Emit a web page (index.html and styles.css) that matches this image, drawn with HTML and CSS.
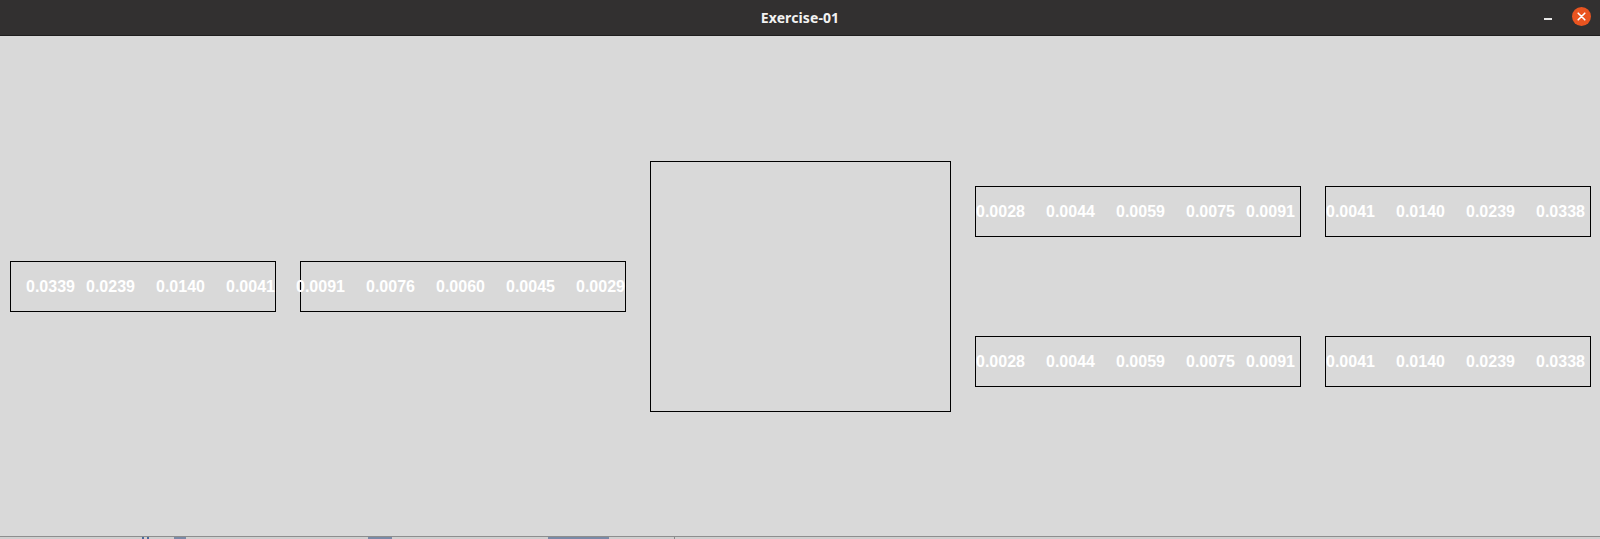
FILE: index.html
```html
<!DOCTYPE html>
<html>
<head>
<meta charset="utf-8">
<title>Exercise-01</title>
<link rel="stylesheet" href="styles.css">
</head>
<body>
<div class="window">
  <header class="titlebar">
    <div class="title">Exercise-01</div>
    <div class="controls">
      <span class="minimize"></span>
      <span class="close">
        <svg width="19" height="19" viewBox="0 0 19 19"><circle cx="9.5" cy="9.5" r="9.5" fill="#e95420"/><path d="M6.2 6.2 L12.8 12.8 M12.8 6.2 L6.2 12.8" stroke="#fff" stroke-width="1.6" stroke-linecap="round"/></svg>
      </span>
    </div>
  </header>
  <main class="content">
    <div class="readout w266 pad-15">
      <span class="val narrow">0.0339</span>
      <span class="val">0.0239</span>
      <span class="val">0.0140</span>
      <span class="val">0.0041</span>
    </div>
    <div class="readout w326 pull-5">
      <span class="val">0.0091</span>
      <span class="val">0.0076</span>
      <span class="val">0.0060</span>
      <span class="val">0.0045</span>
      <span class="val">0.0029</span>
    </div>
    <div class="canvas"></div>
    <div class="column">
      <div class="readout w326">
        <span class="val">0.0028</span>
        <span class="val">0.0044</span>
        <span class="val">0.0059</span>
        <span class="val narrow">0.0075</span>
        <span class="val">0.0091</span>
      </div>
      <div class="readout w326">
        <span class="val">0.0028</span>
        <span class="val">0.0044</span>
        <span class="val">0.0059</span>
        <span class="val narrow">0.0075</span>
        <span class="val">0.0091</span>
      </div>
    </div>
    <div class="column">
      <div class="readout w266">
        <span class="val">0.0041</span>
        <span class="val">0.0140</span>
        <span class="val">0.0239</span>
        <span class="val">0.0338</span>
      </div>
      <div class="readout w266">
        <span class="val">0.0041</span>
        <span class="val">0.0140</span>
        <span class="val">0.0239</span>
        <span class="val">0.0338</span>
      </div>
    </div>
  </main>
  <div class="desktop"></div>
</div>
</body>
</html>
```

FILE: styles.css
```css
html, body {
  margin: 0;
  padding: 0;
  background: #d9d9d9;
}

.window {
  width: 1600px;
  height: 539px;
  display: flex;
  flex-direction: column;
  overflow: hidden;
}

.titlebar {
  height: 35px;
  flex: 0 0 35px;
  background: #323030;
  border-bottom: 1px solid #1f1e1e;
  display: flex;
  align-items: center;
  justify-content: center;
  position: relative;
}

.title {
  font-family: "Noto Sans", "DejaVu Sans", sans-serif;
  font-weight: 700;
  font-size: 14px;
  color: #f2f2f2;
  letter-spacing: 0.1px;
  margin-top: -1px;
}

.controls {
  position: absolute;
  right: 9px;
  top: 7px;
  display: flex;
  align-items: center;
  gap: 20px;
}

.minimize {
  display: block;
  width: 8px;
  height: 2px;
  background: #e8e8e8;
  margin-top: 5px;
}

.close {
  display: block;
  width: 19px;
  height: 19px;
}

.close svg {
  display: block;
}

.content {
  height: 500px;
  flex: 0 0 500px;
  background: #d9d9d9;
  display: flex;
  align-items: center;
  gap: 24px;
  padding-left: 10px;
}

.readout {
  box-sizing: border-box;
  height: 51px;
  border: 1px solid #000;
  display: flex;
  align-items: center;
  flex-shrink: 0;
}

.content > .readout,
.content > .canvas,
.content > .column {
  margin-top: 1px;
}

.w266 { width: 266px; }
.w326 { width: 326px; }

.pad-15 { padding-left: 15px; }
.pull-5 .val:first-child { margin-left: -5px; }

.val {
  flex: 0 0 70px;
  width: 70px;
  white-space: nowrap;
  font-family: "Liberation Sans", Arial, sans-serif;
  font-weight: 700;
  font-size: 16px;
  line-height: 18px;
  color: #ffffff;
}

.val.narrow {
  flex-basis: 60px;
  width: 60px;
}

.canvas {
  box-sizing: border-box;
  width: 301px;
  height: 251px;
  border: 1px solid #000;
  flex-shrink: 0;
}

.column {
  display: flex;
  flex-direction: column;
  gap: 99px;
}

.desktop {
  flex: 0 0 3px;
  height: 3px;
  border-top: 1px solid #8e8e8e;
  background:
    linear-gradient(to right,
      #cfcfcf 0, #cfcfcf 142px,
      #4a6a9a 142px, #4a6a9a 144px,
      #cfcfcf 144px, #cfcfcf 147px,
      #4a6a9a 147px, #4a6a9a 149px,
      #cfcfcf 149px, #cfcfcf 174px,
      #7a8aa6 174px, #7a8aa6 186px,
      #cfcfcf 186px, #cfcfcf 368px,
      #7a8aa6 368px, #7a8aa6 392px,
      #cfcfcf 392px, #cfcfcf 548px,
      #7a8aa6 548px, #7a8aa6 609px,
      #cfcfcf 609px, #cfcfcf 674px,
      #8a8a8a 674px, #8a8a8a 675px,
      #cfcfcf 675px, #cfcfcf 100%);
}
```
